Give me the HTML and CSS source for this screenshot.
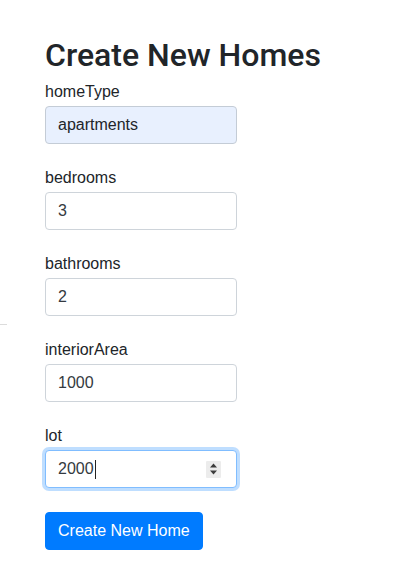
FILE: index.html
```html
<!DOCTYPE html>
<html lang="en">
<head>
<meta charset="utf-8">
<title>Create New Homes</title>
<link rel="stylesheet" href="styles.css">
</head>
<body>
<div class="edge-mark"></div>
<main class="page">
  <h2 class="title">Create New Homes</h2>
  <form class="form">
    <div class="group">
      <label class="label" for="homeType">homeType</label>
      <input class="control autofill" id="homeType" type="text" value="apartments" readonly>
    </div>
    <div class="group">
      <label class="label" for="bedrooms">bedrooms</label>
      <input class="control" id="bedrooms" type="text" value="3" readonly>
    </div>
    <div class="group">
      <label class="label" for="bathrooms">bathrooms</label>
      <input class="control" id="bathrooms" type="text" value="2" readonly>
    </div>
    <div class="group">
      <label class="label" for="interiorArea">interiorArea</label>
      <input class="control" id="interiorArea" type="text" value="1000" readonly>
    </div>
    <div class="group">
      <label class="label">lot</label>
      <div class="control focused">
        <span class="value">2000<span class="caret"></span></span>
        <span class="spinner">
          <svg width="9" height="14" viewBox="0 0 9 14"><path d="M4.5 1.5 L8 5.5 H1 Z M1 8.5 H8 L4.5 12.5 Z" fill="#3c3c3c"/></svg>
        </span>
      </div>
    </div>
    <button class="btn" type="button">Create New Home</button>
  </form>
</main>
</body>
</html>
```
FILE: styles.css
```css
* { box-sizing: border-box; }
html, body { margin: 0; padding: 0; background: #fff; }
body {
  font-family: "Liberation Sans", Arial, sans-serif;
  font-size: 16px;
  line-height: 1.5;
  color: #212529;
  position: relative;
}
.edge-mark {
  position: absolute;
  left: 0;
  top: 324px;
  width: 7px;
  height: 1px;
  background: #dcdcdc;
}
.page {
  padding: 36px 0 0 45px;
}
.title {
  margin: 0 0 6px;
  font-family: Roboto, "Liberation Sans", Arial, sans-serif;
  font-size: 32px;
  font-weight: 500;
  line-height: 1.2;
  color: #212529;
  white-space: nowrap;
}
.form { display: flex; flex-direction: column; align-items: flex-start; }
.group {
  display: flex;
  flex-direction: column;
  width: 192px;
  margin-bottom: 22px;
}
.group:last-of-type { margin-bottom: 24px; }
.label {
  display: block;
  line-height: 24px;
  margin-bottom: 2px;
}
.control {
  display: flex;
  align-items: center;
  width: 192px;
  height: 38px;
  padding: 6px 12px;
  font-family: inherit;
  font-size: 16px;
  line-height: 24px;
  color: #343a40;
  background: #fff;
  border: 1px solid #ced4da;
  border-radius: 4px;
  outline: none;
}
.control.autofill { background: #e8f0fe; border-color: #c4ccd6; color: #212529; }
.control.focused {
  border-color: #80bdff;
  box-shadow: 0 0 0 3px rgba(0, 123, 255, 0.25);
  justify-content: space-between;
  padding-right: 15px;
}
.value { display: flex; align-items: center; }
.caret {
  display: inline-block;
  width: 1px;
  height: 19px;
  background: #222;
  margin-left: 1px;
}
.spinner {
  display: flex;
  align-items: center;
  justify-content: center;
  width: 15px;
  height: 17px;
  background: #ececec;
  border-radius: 1px;
}
.btn {
  font-family: inherit;
  font-size: 16px;
  line-height: 24px;
  padding: 6px 12px;
  color: #fff;
  background: #007bff;
  border: 1px solid #007bff;
  border-radius: 4px;
  cursor: pointer;
}
```
